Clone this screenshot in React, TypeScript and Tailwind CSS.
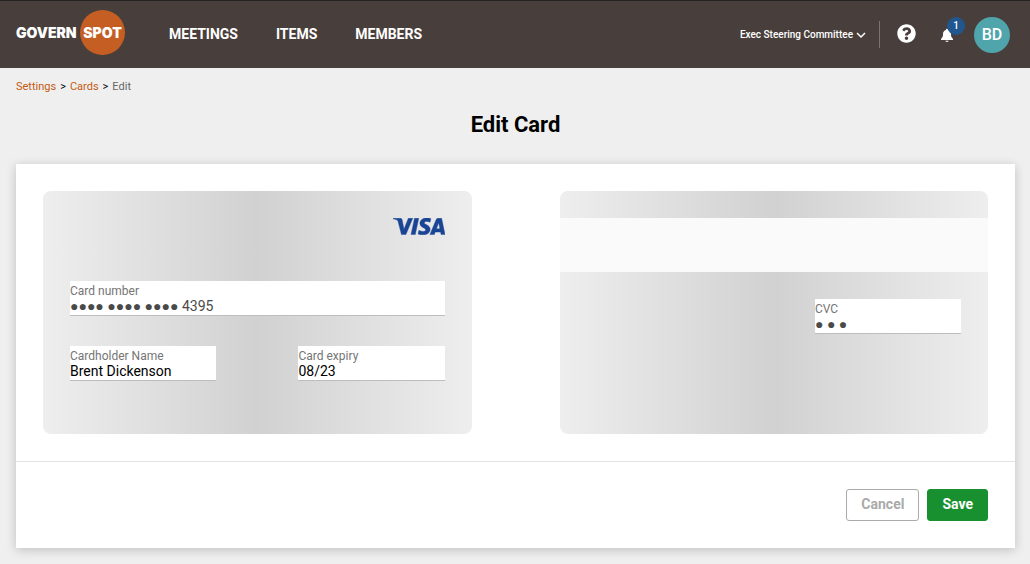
import { useState } from "react";

const navLinks = ["Meetings", "Items", "Members"];

function Logo() {
  return (
    <a
      href="#home"
      aria-label="GovernSpot home"
      className="flex items-center font-['Inter',sans-serif] text-sm font-black leading-none text-white"
    >
      <span className="w-16">GOVERN</span>
      <span className="flex size-[45px] items-center justify-center rounded-full bg-[#c55e22]">
        SPOT
      </span>
    </a>
  );
}

function BellIcon() {
  return (
    <svg viewBox="0 0 24 24" className="size-4" fill="currentColor" aria-hidden="true">
      <path d="M12 22.5c1.4 0 2.3-.8 2.5-1.8h-5c.2 1 1.1 1.8 2.5 1.8zM19 15.5c-.7-1-1-2.5-1-5 0-3-1.64-5.2-4.5-5.9V4c0-.83-.67-1.5-1.5-1.5s-1.5.67-1.5 1.5v.6C7.64 5.3 6 7.5 6 10.5c0 2.5-.3 4-1 5L3 18v1.5h18V18z" />
    </svg>
  );
}

function HelpIcon() {
  return (
    <svg viewBox="0 0 512 512" className="size-[19px]" fill="currentColor" aria-hidden="true">
      <path d="M504 256c0 136.997-111.043 248-248 248S8 392.997 8 256C8 119.083 119.043 8 256 8s248 111.083 248 248zM262.655 90c-54.497 0-89.255 22.957-116.549 63.758-3.536 5.286-2.353 12.415 2.715 16.258l34.699 26.31c5.205 3.947 12.621 3.008 16.665-2.122 17.864-22.658 30.113-35.797 57.303-35.797 20.429 0 45.698 13.148 45.698 32.958 0 14.976-12.363 22.667-32.534 33.976C247.128 238.528 216 254.941 216 296v4c0 6.627 5.373 12 12 12h56c6.627 0 12-5.373 12-12v-1.333c0-28.462 83.186-29.647 83.186-106.667 0-58.002-60.165-102-116.531-102zM256 338c-25.365 0-46 20.635-46 46 0 25.364 20.635 46 46 46s46-20.636 46-46c0-25.365-20.635-46-46-46z" />
    </svg>
  );
}

function VisaLogo() {
  return (
    <svg viewBox="0 0 1000 324" className="w-[52px]" role="img" aria-label="Visa" fill="#1a4595" stroke="#1a4595" strokeWidth="8">
      <path d="M651 0c-71 0-134 37-134 105 0 78 112 83 112 122 0 17-19 31-51 31-46 0-80-21-80-21l-15 69s39 18 92 18c78 0 139-39 139-108 0-83-113-88-113-124 0-13 16-27 47-27 36 0 65 15 65 15l14-67S696 0 651 0zM2 5L0 15s30 5 57 16c34 13 37 20 42 43l64 245h85L380 5h-85l-84 213-35-181c-3-21-19-32-39-32H2zm412 0l-67 314h81L495 5h-81zm453 0c-20 0-30 10-38 29L710 319h85l16-48h104l10 48h75L935 5h-68zm11 85l25 118h-67l42-118z" />
    </svg>
  );
}

function Field({
  id,
  label,
  initial,
  masked = false,
  className = "",
}: {
  id: string;
  label: string;
  initial: string;
  masked?: boolean;
  className?: string;
}) {
  const [value, setValue] = useState(initial);
  return (
    <div className={`flex h-[35px] flex-col border-b border-[#bdbdbd] bg-white pt-[3px] ${className}`}>
      <label htmlFor={id} className="text-xs leading-[14px] text-[#757575]">
        {label}
      </label>
      <input
        id={id}
        value={value}
        onChange={(e) => setValue(e.target.value)}
        className={`h-4 w-full bg-transparent text-sm leading-4 outline-none ${masked ? "text-[#4a4a4a]" : "text-black"}`}
      />
    </div>
  );
}

export default function App() {
  return (
    <div className="min-h-screen bg-[#efefef] pb-4 font-['Roboto','Liberation_Sans',sans-serif] text-black">
      <header className="flex h-[68px] items-center border-t border-[#252424] bg-[#483e3b] pl-4 pr-5 text-white">
        <div className="pb-1">
          <Logo />
        </div>
        <nav className="ml-11 flex gap-[38px] pb-0.5 text-sm font-bold uppercase">
          {navLinks.map((name) => (
            <a key={name} href={`#${name.toLowerCase()}`}>
              {name}
            </a>
          ))}
        </nav>
        <div className="ml-auto flex items-center">
          <button type="button" className="flex items-center gap-[3px] text-[10px] font-medium">
            Exec Steering Committee
            <svg viewBox="0 0 10 10" className="size-[10px]" fill="none" stroke="currentColor" strokeWidth="1.5" aria-hidden="true">
              <path d="M1 3l4 4 4-4" />
            </svg>
          </button>
          <div className="ml-[13px] h-[27px] w-px bg-[#7b7371]" />
          <button type="button" aria-label="Help" className="ml-[17px] pb-[3px]">
            <HelpIcon />
          </button>
          <button type="button" aria-label="Notifications" className="relative ml-[23px]">
            <BellIcon />
            <span className="absolute -top-2.5 left-2 flex size-[18px] items-center justify-center rounded-full bg-[#22568f] text-[10px] font-medium">
              1
            </span>
          </button>
          <button
            type="button"
            aria-label="Account"
            className="ml-[19px] flex size-9 items-center justify-center rounded-full bg-[#50a5ad] text-base font-medium"
          >
            BD
          </button>
        </div>
      </header>

      <main className="pl-4 pr-[15px]">
        <nav aria-label="Breadcrumb" className="flex gap-1 pt-3 text-[11px] leading-[14px]">
          <a href="#settings" className="text-[#c55a11]">Settings</a>
          <span>&gt;</span>
          <a href="#cards" className="text-[#c55a11]">Cards</a>
          <span>&gt;</span>
          <span className="text-[#666]">Edit</span>
        </nav>
        <h1 className="mt-[17px] text-center text-[22px] font-bold leading-7">Edit Card</h1>

        <form
          onSubmit={(e) => e.preventDefault()}
          className="mt-[25px] bg-white shadow-[0_2px_10px_rgba(0,0,0,0.2)]"
        >
          <div className="grid grid-cols-2 gap-[88px] border-b border-[#e2e2e2] p-[27px]">
            <section
              aria-label="Card front"
              className="h-[243px] rounded-lg bg-linear-to-r from-[#eee] via-[#d1d1d1] to-[#eee] px-[27px] pt-[27px]"
            >
              <div className="flex h-[63px] justify-end">
                <div>
                  <VisaLogo />
                </div>
              </div>
              <Field id="number" label="Card number" initial="●●●● ●●●● ●●●● 4395" masked />
              <div className="mt-[30px] flex justify-between">
                <Field id="name" label="Cardholder Name" initial="Brent Dickenson" className="w-[39%]" />
                <Field id="expiry" label="Card expiry" initial="08/23" className="w-[39%]" />
              </div>
            </section>
            <section
              aria-label="Card back"
              className="h-[243px] rounded-lg bg-linear-to-r from-[#eee] via-[#d1d1d1] to-[#eee] pt-[27px]"
            >
              <div className="h-[54px] bg-[#fafafa]" />
              <div className="flex justify-end px-[27px] pt-[27px]">
                <Field id="cvc" label="CVC" initial="● ● ●" masked className="w-[39%]" />
              </div>
            </section>
          </div>
          <div className="flex justify-end gap-2 p-[27px] text-sm font-bold">
            <button type="button" className="h-8 rounded-[3px] border border-[#aaa] px-3.5 pb-0.5 text-[#aaa]">
              Cancel
            </button>
            <button type="submit" className="h-8 rounded-[3px] border border-[#19902f] bg-[#19902f] px-3.5 pb-0.5 text-white">
              Save
            </button>
          </div>
        </form>
      </main>
    </div>
  );
}
